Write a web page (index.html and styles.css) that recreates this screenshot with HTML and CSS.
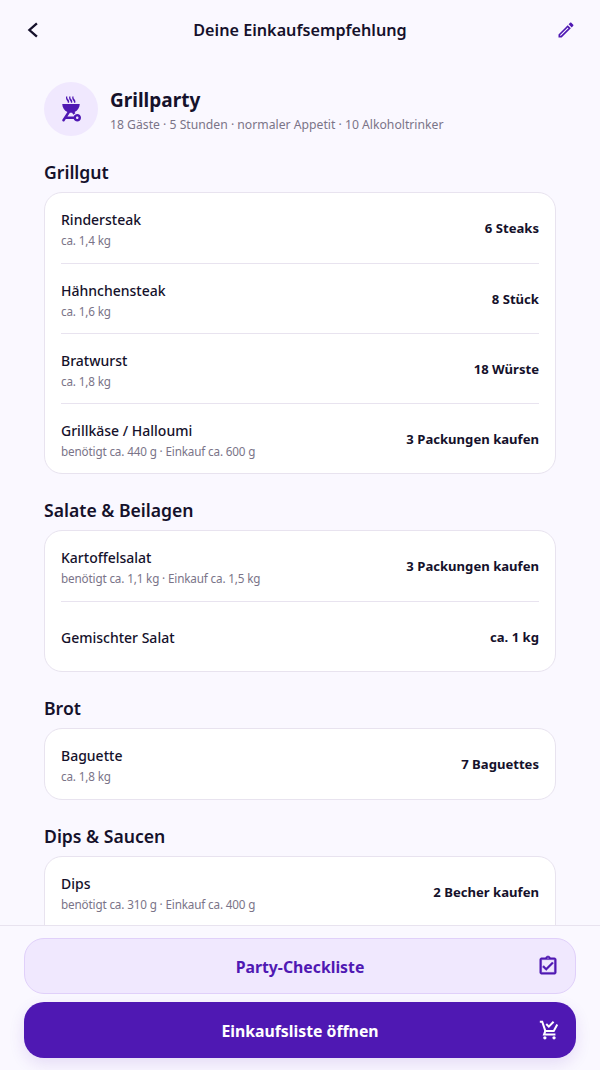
FILE: index.html
```html
<!DOCTYPE html>
<html lang="de">

<head>
    <meta charset="UTF-8">
    <meta name="viewport" content="width=device-width, initial-scale=1.0">
    <title>Deine Einkaufsempfehlung</title>
    <link rel="stylesheet" href="styles.css">
</head>

<body>
    <div class="screen">
        <header class="topbar">
            <svg class="icon-back" viewBox="0 0 24 24" width="20" height="20"><path d="M15.5 4 6.5 12l9 8" fill="none" stroke="currentColor" stroke-width="2.8"/></svg>
            <h1>Deine Einkaufsempfehlung</h1>
            <svg class="icon-edit" viewBox="0 0 24 24" width="20" height="20"><path fill="currentColor" d="M3 17.25V21h3.75L17.81 9.94l-3.75-3.75L3 17.25zM5.92 19H5v-.92l9.06-9.06.92.92L5.92 19zM20.71 5.63l-2.34-2.34c-.2-.2-.45-.29-.71-.29s-.51.1-.7.29l-1.83 1.83 3.75 3.75 1.83-1.83c.39-.39.39-1.02 0-1.41z"/></svg>
        </header>

        <main class="content">
            <div class="hero">
                <div class="hero-icon">
                    <svg viewBox="0 0 24 24" width="30" height="30"><path fill="currentColor" d="M17 22c1.66 0 3-1.34 3-3s-1.34-3-3-3c-1.3 0-2.4.84-2.82 2H9.14l1.99-3.06c.29.04.58.06.87.06s.58-.02.87-.06l1.02 1.57c.42-.53.96-.95 1.6-1.21l-.6-.93C17.31 13.27 19 10.84 19 8H5c0 2.84 1.69 5.27 4.11 6.37l-3.95 6.08c-.3.46-.17 1.08.29 1.38s1.08.17 1.38-.29l1-1.55h6.34C14.6 21.2 15.7 22 17 22zm0-4c.55 0 1 .45 1 1s-.45 1-1 1-1-.45-1-1 .45-1 1-1zM9.45 7h1c.15-1.15.23-1.64-.89-2.96-.42-.5-.68-.78-.52-2.04h-1c-.16 1.39.1 2.26.59 2.9.27.36.94.93.82 2.1zM11.95 7h1c.15-1.15.23-1.64-.89-2.96-.42-.5-.68-.78-.52-2.04h-1c-.16 1.39.1 2.26.59 2.9.27.36.94.93.82 2.1zM14.45 7h1c.15-1.15.23-1.64-.89-2.96-.42-.5-.68-.78-.52-2.04h-1c-.16 1.39.1 2.26.59 2.9.27.36.94.93.82 2.1z"/></svg>
                </div>
                <div class="hero-text">
                    <div class="hero-title">Grillparty</div>
                    <div class="hero-sub">18 Gäste · 5 Stunden · normaler Appetit · 10 Alkoholtrinker</div>
                </div>
            </div>

            <section>
                <h2>Grillgut</h2>
                <div class="card">
                    <div class="row">
                        <div>
                            <div class="name">Rindersteak</div>
                            <div class="note">ca. 1,4 kg</div>
                        </div>
                        <div class="amount">6 Steaks</div>
                    </div>
                    <div class="row">
                        <div>
                            <div class="name">Hähnchensteak</div>
                            <div class="note">ca. 1,6 kg</div>
                        </div>
                        <div class="amount">8 Stück</div>
                    </div>
                    <div class="row">
                        <div>
                            <div class="name">Bratwurst</div>
                            <div class="note">ca. 1,8 kg</div>
                        </div>
                        <div class="amount">18 Würste</div>
                    </div>
                    <div class="row">
                        <div>
                            <div class="name">Grillkäse / Halloumi</div>
                            <div class="note">benötigt ca. 440 g · Einkauf ca. 600 g</div>
                        </div>
                        <div class="amount">3 Packungen kaufen</div>
                    </div>
                </div>
            </section>

            <section>
                <h2>Salate &amp; Beilagen</h2>
                <div class="card">
                    <div class="row">
                        <div>
                            <div class="name">Kartoffelsalat</div>
                            <div class="note">benötigt ca. 1,1 kg · Einkauf ca. 1,5 kg</div>
                        </div>
                        <div class="amount">3 Packungen kaufen</div>
                    </div>
                    <div class="row">
                        <div>
                            <div class="name">Gemischter Salat</div>
                        </div>
                        <div class="amount">ca. 1 kg</div>
                    </div>
                </div>
            </section>

            <section>
                <h2>Brot</h2>
                <div class="card">
                    <div class="row">
                        <div>
                            <div class="name">Baguette</div>
                            <div class="note">ca. 1,8 kg</div>
                        </div>
                        <div class="amount">7 Baguettes</div>
                    </div>
                </div>
            </section>

            <section>
                <h2>Dips &amp; Saucen</h2>
                <div class="card card-cut">
                    <div class="row">
                        <div>
                            <div class="name">Dips</div>
                            <div class="note">benötigt ca. 310 g · Einkauf ca. 400 g</div>
                        </div>
                        <div class="amount">2 Becher kaufen</div>
                    </div>
                </div>
            </section>
        </main>

        <footer class="actions">
            <button class="btn btn-light">
                Party-Checkliste
                <svg class="btn-icon" viewBox="0 0 24 24" width="22" height="22"><path fill="currentColor" stroke="currentColor" stroke-width="0.5" d="M18 9l-1.41-1.42L10 14.17l-2.59-2.58L6 13l4 3.99zm1-6h-4.18C14.4 1.84 13.3 1 12 1c-1.3 0-2.4.84-2.82 2H5c-.14 0-.27.01-.4.04-.39.08-.74.28-1.01.55-.18.18-.33.4-.43.64-.1.23-.16.49-.16.77v14c0 .27.06.54.16.78s.25.45.43.64c.27.27.62.47 1.01.55.13.02.26.03.4.03h14c1.1 0 2-.9 2-2V5c0-1.1-.9-2-2-2zm-7-.25c.41 0 .75.34.75.75s-.34.75-.75.75-.75-.34-.75-.75.34-.75.75-.75zM19 19H5V5h14v14z"/></svg>
            </button>
            <button class="btn btn-primary">
                Einkaufsliste öffnen
                <svg class="btn-icon" viewBox="0 0 24 24" width="22" height="22"><g fill="none" stroke="currentColor" stroke-width="2.2"><path d="M2 3h2.6l3.4 10h9.2L21 6"/><path d="M8 13l-1.4 4H19"/><path d="M9 5.5l2.8 2.8L17 3"/></g><circle cx="7.5" cy="20.5" r="1.8" fill="currentColor"/><circle cx="17.5" cy="20.5" r="1.8" fill="currentColor"/></svg>
            </button>
        </footer>
    </div>
</body>

</html>
```

FILE: styles.css
```css
body {
    font-family: "Noto Sans", "Open Sans", sans-serif;
    background-color: #faf8ff;
    color: #15112b;
    margin: 0;
}

.screen {
    display: flex;
    flex-direction: column;
    height: 100vh;
    overflow: hidden;
}

.topbar {
    flex: none;
    height: 60px;
    display: flex;
    align-items: center;
    justify-content: space-between;
    padding: 0 24px;
}

.topbar h1 {
    font-size: 16.2px;
    font-weight: 600;
    margin: 0;
}

.icon-edit {
    color: #4f18b3;
}

.content {
    flex: 1;
    min-height: 0;
    overflow: hidden;
    padding: 22px 44px 0;
}

.hero {
    display: flex;
    align-items: center;
    gap: 12px;
    margin-bottom: 24px;
}

.hero-icon {
    width: 54px;
    height: 54px;
    border-radius: 50%;
    background-color: #f0e8fe;
    color: #4f18b3;
    display: flex;
    align-items: center;
    justify-content: center;
}

.hero-text {
    padding-top: 4px;
}

.hero-title {
    font-size: 19px;
    font-weight: 700;
    line-height: 24px;
}

.hero-sub {
    font-size: 12.2px;
    line-height: 20px;
    margin-top: 3px;
    color: #7a7488;
}

section {
    margin-bottom: 24px;
}

h2 {
    font-size: 17.6px;
    font-weight: 600;
    line-height: 24px;
    margin: 0 0 8px;
}

.card {
    background-color: #fff;
    border: 1px solid #e8e3ef;
    border-radius: 18px;
    padding: 0 16px;
}

/* the list runs on under the footer */
.card-cut {
    padding-bottom: 40px;
}

.row {
    box-sizing: border-box;
    height: 70px;
    display: flex;
    align-items: center;
    justify-content: space-between;
}

.row + .row {
    border-top: 1px solid #e8e3ef;
}

.name {
    font-size: 14px;
    font-weight: 500;
    line-height: 20px;
    padding-top: 3px;
}

.note {
    font-size: 11.7px;
    letter-spacing: -0.15px;
    line-height: 18px;
    margin-top: 1px;
    color: #7a7488;
}

.amount {
    font-size: 13.1px;
    font-weight: 700;
}

.actions {
    flex: none;
    display: flex;
    flex-direction: column;
    gap: 8px;
    padding: 12px 24px;
    background-color: #faf8ff;
    border-top: 1px solid #e8e3ef;
}

.btn {
    position: relative;
    height: 56px;
    padding-top: 2px;
    border-radius: 20px;
    font-family: inherit;
    font-size: 15.8px;
    font-weight: 700;
    cursor: pointer;
}

.btn-light {
    background-color: #f0e8fe;
    border: 1px solid #e0d0fa;
    color: #4f18b3;
}

.btn-primary {
    background-color: #4f18b3;
    border: none;
    color: #fff;
    box-shadow: 0 6px 16px rgba(79, 24, 179, 0.12);
}

.btn-icon {
    position: absolute;
    right: 16px;
    top: 50%;
    transform: translateY(-50%);
}
```
